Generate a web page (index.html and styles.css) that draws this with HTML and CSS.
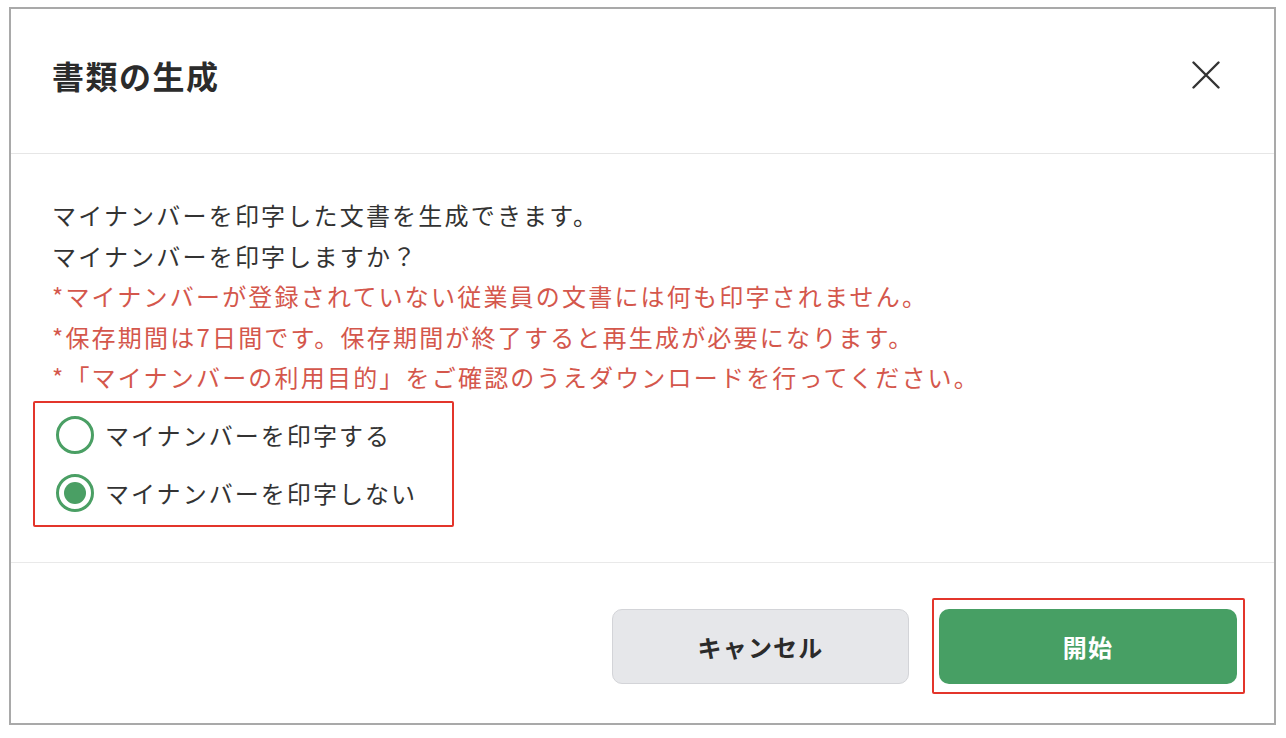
FILE: index.html
```html
<!DOCTYPE html>
<html lang="ja">
<head>
<meta charset="utf-8">
<link rel="stylesheet" href="styles.css">
</head>
<body>
<div class="dialog">
  <div class="dialog-header">
    <h1 class="dialog-title">書類の生成</h1>
    <button class="close-btn" aria-label="閉じる">
      <svg width="28" height="28" viewBox="0 0 28 28"><path d="M1.5 1.5 L26.5 26.5 M26.5 1.5 L1.5 26.5" stroke="#333" stroke-width="2.4" stroke-linecap="round" fill="none"/></svg>
    </button>
  </div>
  <div class="dialog-body">
    <p class="line">マイナンバーを印字した文書を生成できます。</p>
    <p class="line">マイナンバーを印字しますか？</p>
    <p class="line note">*マイナンバーが登録されていない従業員の文書には何も印字されません。</p>
    <p class="line note">*保存期間は7日間です。保存期間が終了すると再生成が必要になります。</p>
    <p class="line note">*「マイナンバーの利用目的」をご確認のうえダウンロードを行ってください。</p>
    <div class="radio-group">
      <label class="radio-row"><span class="radio"></span><span class="radio-label">マイナンバーを印字する</span></label>
      <label class="radio-row"><span class="radio checked"></span><span class="radio-label">マイナンバーを印字しない</span></label>
    </div>
  </div>
  <div class="dialog-footer">
    <button class="btn btn-cancel">キャンセル</button>
    <button class="btn btn-start">開始</button>
  </div>
</div>
</body>
</html>
```
FILE: styles.css
```css
* { box-sizing: border-box; }
html, body { margin: 0; padding: 0; background: #fff; }
body {
  font-family: "Noto Sans CJK JP", "Noto Sans", sans-serif;
  color: #333;
}
.dialog {
  margin: 7px 0 0 9px;
  width: 1267px;
  height: 718px;
  border: 2px solid #a9a9a9;
  display: flex;
  flex-direction: column;
}
.dialog-header {
  height: 145px;
  border-bottom: 1px solid #e6e6e6;
  display: flex;
  align-items: center;
  justify-content: space-between;
  padding: 0 54px 12px 41px;
}
.dialog-title {
  margin: 0;
  font-size: 32px;
  font-weight: 700;
  letter-spacing: 1.5px;
  color: #2b2b2b;
}
.close-btn {
  border: none;
  background: none;
  padding: 0;
  width: 28px;
  height: 28px;
  display: flex;
}
.dialog-body {
  padding: 41px 41px 0 41px;
  height: 409px;
  border-bottom: 1px solid #e9e9e9;
}
.line {
  margin: 0;
  font-size: 24px;
  line-height: 40.5px;
  letter-spacing: 2.2px;
  white-space: nowrap;
}
.note { color: #d4574c; }
.radio-group {
  position: relative;
  margin: 3px 0 0 -19px;
  width: 421px;
  padding: 5px 0 5px 23px;
}
.radio-group::after {
  content: "";
  position: absolute;
  inset: 0;
  border: 2px solid #e3352b;
  border-radius: 2px;
}
.radio-row {
  display: flex;
  align-items: center;
  height: 58px;
}
.radio {
  width: 38px;
  height: 38px;
  border: 3px solid #4a9f64;
  border-radius: 50%;
  display: flex;
  align-items: center;
  justify-content: center;
  flex: none;
}
.radio.checked::before {
  content: "";
  width: 22px;
  height: 22px;
  border-radius: 50%;
  background: #4a9f64;
}
.radio-label {
  margin-left: 11px;
  font-size: 24px;
  letter-spacing: 2.05px;
  color: #333;
}
.dialog-footer {
  flex: 1;
  display: flex;
  justify-content: flex-end;
  align-items: flex-start;
  padding: 46px 37px 0 0;
  gap: 30px;
}
.btn {
  height: 75px;
  border-radius: 10px;
  font-family: "Noto Sans CJK JP", "Noto Sans", sans-serif;
  font-size: 24px;
  font-weight: 700;
  letter-spacing: 1.2px;
  cursor: pointer;
}
.btn-cancel {
  width: 297px;
  background: #e6e7ea;
  border: 1px solid #d3d4d8;
  color: #2b2b2b;
}
.btn-start {
  position: relative;
  width: 298px;
  background: #479f64;
  border: none;
  color: #fff;
}
.btn-start::after {
  content: "";
  position: absolute;
  top: -11px;
  bottom: -10px;
  left: -7px;
  right: -8px;
  border: 2px solid #e3352b;
  border-radius: 2px;
}
```
